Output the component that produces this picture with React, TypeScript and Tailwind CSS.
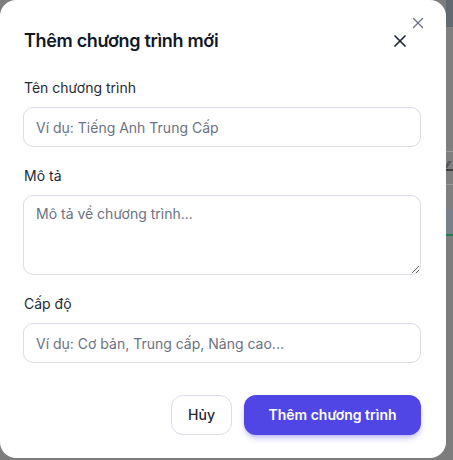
import React from "react";
import { X } from "lucide-react";

export default function App() {
  return (
    <div
      className="flex w-[453px] h-[460px] bg-[#7d7d7d] overflow-hidden"
      style={{ fontFamily: "Inter, 'Noto Sans', sans-serif" }}
    >
      <div className="relative w-[446px] h-[458px] bg-white rounded-2xl pl-[23px] pr-[25px] pt-[27px] pb-6 flex flex-col shrink-0">
        <button className="absolute right-[19px] top-[14px] text-[#6b7280]">
          <X size={18} strokeWidth={1.75} />
        </button>
        <div className="flex items-center justify-between mb-[23px]">
          <h2 className="ml-px text-[18px] leading-7 font-semibold tracking-[-0.018em] text-[#111827]">Thêm chương trình mới</h2>
          <button className="mr-[11px] text-[#1f2937]">
            <X size={20} strokeWidth={2} />
          </button>
        </div>
        <div className="flex flex-col gap-[19px]">
          <div className="flex flex-col">
            <label className="ml-px text-sm leading-5 font-normal text-[#1f2937] mb-[9px]">Tên chương trình</label>
            <input
              className="h-10 w-full rounded-[10px] border border-[#d9dde9] px-3 text-sm text-[#111827] placeholder:text-[#6b7280] outline-none"
              placeholder="Ví dụ: Tiếng Anh Trung Cấp"
            />
          </div>
          <div className="flex flex-col">
            <label className="ml-px text-sm leading-5 font-normal text-[#1f2937] mb-[9px]">Mô tả</label>
            <textarea
              className="block h-20 w-full rounded-[10px] border border-[#d9dde9] px-3 py-2 text-sm text-[#111827] placeholder:text-[#6b7280] outline-none"
              placeholder="Mô tả về chương trình..."
            />
          </div>
          <div className="flex flex-col">
            <label className="ml-px text-sm leading-5 font-normal text-[#1f2937] mb-[9px]">Cấp độ</label>
            <input
              className="h-10 w-full rounded-[10px] border border-[#d9dde9] px-3 text-sm text-[#111827] placeholder:text-[#6b7280] outline-none"
              placeholder="Ví dụ: Cơ bản, Trung cấp, Nâng cao..."
            />
          </div>
        </div>
        <div className="flex justify-end gap-3 mt-8">
          <button className="h-10 px-4 rounded-xl border border-[#d9dde9] bg-white text-sm font-medium text-[#1f2937]">
            Hủy
          </button>
          <button className="h-10 w-[177px] rounded-xl bg-[#4f46e5] text-sm font-semibold text-white shadow-md shadow-[#4f46e5]/30">
            Thêm chương trình
          </button>
        </div>
      </div>
      <div className="flex flex-col w-[7px]">
        <div className="h-[27px] bg-[#636971]"></div>
        <div className="h-[124px] bg-[#7f7f7f]"></div>
        <div className="h-px bg-[#9a9a9a]"></div>
        <div className="h-[8px] bg-[#7f7f7f]"></div>
        <div className="h-[9px] bg-[#7f7f7f] text-[9px] leading-[9px] text-[#2a2a2a] overflow-hidden">⁄⁄</div>
        <div className="h-[2px] bg-[#3f3f3f]"></div>
        <div className="h-[13px] bg-[#7f7f7f]"></div>
        <div className="h-px bg-[#999999]"></div>
        <div className="h-[24px] bg-[#7f7f7f]"></div>
        <div className="h-[25px] bg-[#79808a]"></div>
        <div className="h-[2px] bg-[#1f7a52]"></div>
        <div className="flex-1 bg-[#7d7d7d]"></div>
      </div>
    </div>
  );
}
